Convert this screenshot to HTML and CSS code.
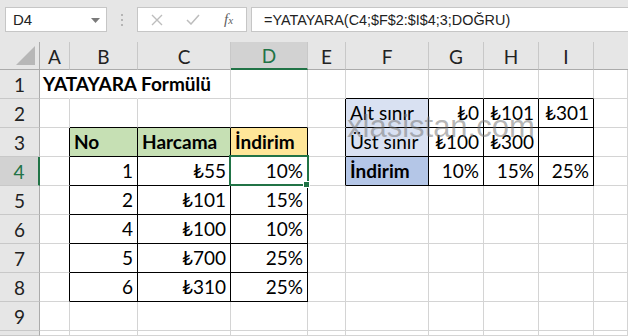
FILE: index.html
```html
<!DOCTYPE html>
<html lang="tr">
<head>
<meta charset="utf-8">
<title>YATAYARA</title>
<link rel="stylesheet" href="styles.css">
</head>
<body>
<div class="app">
  <div class="toolbar">
    <div class="namebox"><span>D4</span>
      <svg class="dd" width="9" height="5" viewBox="0 0 9 5"><path d="M0 0H9L4.5 5Z" fill="#7a7a7a"/></svg>
    </div>
    <div class="grip">
      <svg width="3" height="12" viewBox="0 0 3 12"><rect x="0" y="0" width="2" height="2" fill="#b5b5b5"/><rect x="0" y="5" width="2" height="2" fill="#b5b5b5"/><rect x="0" y="10" width="2" height="2" fill="#b5b5b5"/></svg>
    </div>
    <div class="fxbox">
      <svg class="ico" width="12" height="12" viewBox="0 0 12 12"><path d="M1 1L11 11M11 1L1 11" stroke="#bdbdbd" stroke-width="1.4" fill="none"/></svg>
      <svg class="ico" width="14" height="11" viewBox="0 0 14 11"><path d="M1 6L5 10L13 1" stroke="#bdbdbd" stroke-width="1.5" fill="none"/></svg>
      <span class="fx"><i>f</i><span class="x">x</span></span>
    </div>
    <div class="formula">=YATAYARA(C4;$F$2:$I$4;3;DOĞRU)</div>
  </div>
  <div class="sheet">
    <!-- header row -->
    <div class="corner"><svg width="20" height="20" viewBox="0 0 20 20"><path d="M19 0V19H0Z" fill="#b7b7b7"/></svg></div>
    <div class="ch">A</div><div class="ch">B</div><div class="ch">C</div><div class="ch sel">D</div><div class="ch">E</div><div class="ch">F</div><div class="ch">G</div><div class="ch">H</div><div class="ch">I</div><div class="ch last"></div>
    <!-- row 1 -->
    <div class="rh">1</div>
    <div class="c ov b title">YATAYARA Formülü</div><div class="c ov"></div><div class="c"></div><div class="c"></div><div class="c"></div>
    <div class="c kbb"></div><div class="c kbb"></div><div class="c kbb"></div><div class="c kbb"></div><div class="c"></div>
    <!-- row 2 -->
    <div class="rh">2</div>
    <div class="c"></div><div class="c kbb"></div><div class="c kbb"></div><div class="c kbb"></div><div class="c kbr"></div>
    <div class="c kb lb">Alt sınır</div><div class="c kb r">₺0</div><div class="c kb r">₺101</div><div class="c kb r">₺301</div><div class="c"></div>
    <!-- row 3 -->
    <div class="rh">3</div>
    <div class="c kbr"></div><div class="c kb g b">No</div><div class="c kb g b">Harcama</div><div class="c kb y b">İndirim</div><div class="c kbr"></div>
    <div class="c kb lb">Üst sınır</div><div class="c kb r">₺100</div><div class="c kb r">₺300</div><div class="c kb"></div><div class="c"></div>
    <!-- row 4 -->
    <div class="rh selr">4</div>
    <div class="c kbr"></div><div class="c kb r">1</div><div class="c kb r">₺55</div><div class="c kb r active">10%<span class="selbox"></span><span class="handle"></span></div><div class="c kbr"></div>
    <div class="c kb db b">İndirim</div><div class="c kb r">10%</div><div class="c kb r">15%</div><div class="c kb r">25%</div><div class="c"></div>
    <!-- row 5 -->
    <div class="rh">5</div>
    <div class="c kbr"></div><div class="c kb r">2</div><div class="c kb r">₺101</div><div class="c kb r">15%</div><div class="c"></div>
    <div class="c"></div><div class="c"></div><div class="c"></div><div class="c"></div><div class="c"></div>
    <!-- row 6 -->
    <div class="rh">6</div>
    <div class="c kbr"></div><div class="c kb r">4</div><div class="c kb r">₺100</div><div class="c kb r">10%</div><div class="c"></div>
    <div class="c"></div><div class="c"></div><div class="c"></div><div class="c"></div><div class="c"></div>
    <!-- row 7 -->
    <div class="rh">7</div>
    <div class="c kbr"></div><div class="c kb r">5</div><div class="c kb r">₺700</div><div class="c kb r">25%</div><div class="c"></div>
    <div class="c"></div><div class="c"></div><div class="c"></div><div class="c"></div><div class="c"></div>
    <!-- row 8 -->
    <div class="rh">8</div>
    <div class="c kbr"></div><div class="c kb r">6</div><div class="c kb r">₺310</div><div class="c kb r">25%</div><div class="c"></div>
    <div class="c"></div><div class="c"></div><div class="c"></div><div class="c"></div><div class="c"></div>
    <!-- row 9 -->
    <div class="rh">9</div>
    <div class="c"></div><div class="c"></div><div class="c"></div><div class="c"></div><div class="c"></div>
    <div class="c"></div><div class="c"></div><div class="c"></div><div class="c"></div><div class="c"></div>
    <!-- row 10 -->
    <div class="rh"></div>
    <div class="c"></div><div class="c"></div><div class="c"></div><div class="c"></div><div class="c"></div>
    <div class="c"></div><div class="c"></div><div class="c"></div><div class="c"></div><div class="c"></div>
    <div class="watermark">xlasistan.com</div>
  </div>
</div>
</body>
</html>
```
FILE: styles.css
```css
* { box-sizing: border-box; }
html, body { margin: 0; padding: 0; }
body {
  width: 628px;
  height: 336px;
  overflow: hidden;
  background: #fff;
  font-family: Lato, "DejaVu Sans", sans-serif;
}
.app { width: 628px; height: 336px; display: flex; flex-direction: column; }

.toolbar {
  height: 42px;
  background: #e6e6e6;
  display: flex;
  align-items: flex-start;
  padding-top: 7px;
  padding-left: 5px;
  flex: none;
}
.namebox {
  width: 102px;
  height: 25px;
  background: #fff;
  border: 1px solid #c6c6c6;
  display: flex;
  align-items: center;
  justify-content: space-between;
  padding: 0 6px 0 7px;
  font-family: "Liberation Sans", sans-serif;
  font-size: 15px;
  color: #222;
}
.dd { margin-top: 1px; }
.grip {
  width: 30px;
  height: 25px;
  display: flex;
  align-items: center;
  justify-content: center;
}
.fxbox {
  width: 110px;
  height: 25px;
  background: #fff;
  border: 1px solid #c6c6c6;
  display: flex;
  align-items: center;
  padding-left: 13px;
  gap: 23px;
}
.fx {
  font-family: "Liberation Serif", serif;
  color: #5f5f5f;
  font-size: 15px;
  margin-left: 1px;
}
.fx i { font-style: italic; }
.fx .x { font-style: italic; font-size: 11px; }
.formula {
  flex: 1;
  margin-left: 4px;
  height: 25px;
  background: #fff;
  border: 1px solid #c6c6c6;
  border-right: none;
  padding-left: 12px;
  display: flex;
  align-items: center;
  font-family: "Liberation Sans", sans-serif;
  font-size: 14.4px;
  color: #222;
  white-space: nowrap;
}

.sheet {
  position: relative;
  flex: 1;
  display: grid;
  grid-template-columns: 40px 30px 68px 93px 77px 38px 83px 55px 55px 55px 1fr;
  grid-template-rows: 28px repeat(9, 29px) 1fr;
  font-size: 19px;
  color: #000;
  overflow: hidden;
}
.corner {
  background: #e6e6e6;
  border-right: 1px solid #ababab;
  border-bottom: 1px solid #ababab;
  display: flex;
  align-items: flex-end;
  justify-content: flex-end;
  padding: 0 3px 3px 0;
}
.ch {
  background: #e6e6e6;
  border-right: 1px solid #c8c8c8;
  border-bottom: 1px solid #ababab;
  display: flex;
  align-items: center;
  justify-content: center;
  padding-top: 1px;
  color: #222;
}
.ch.last { border-right: none; }
.ch.sel {
  background: #d2d2d2;
  border-bottom: 2px solid #217346;
  color: #217346;
}
.rh {
  background: #e6e6e6;
  border-right: 1px solid #ababab;
  border-bottom: 1px solid #c8c8c8;
  display: flex;
  align-items: center;
  justify-content: center;
  color: #222;
}
.rh.selr {
  background: #d2d2d2;
  border-right: 2px solid #217346;
  color: #217346;
}
.c {
  border-right: 1px solid #d4d4d4;
  border-bottom: 1px solid #d4d4d4;
  line-height: 28px;
  padding: 0 4px;
  white-space: nowrap;
  overflow: hidden;
}
.c.ov { overflow: visible; border-right-color: #fff; position: relative; z-index: 1; }
.title { padding-left: 3px; }
.r { text-align: right; }
.b { font-weight: bold; }
.g { background: #c6e0b4; }
.y { background: #ffe699; }
.lb { background: #d9e1f2; }
.db { background: #b4c6e7; }
.kb { border-right-color: #000; border-bottom-color: #000; }
.kbb { border-bottom-color: #000; }
.kbr { border-right-color: #000; }
.active { position: relative; overflow: visible; }
.selbox {
  position: absolute;
  left: -2px;
  top: -2px;
  width: 80px;
  height: 31px;
  border: 2px solid #217346;
}
.handle {
  position: absolute;
  left: 72px;
  top: 24px;
  width: 7px;
  height: 7px;
  background: #217346;
  border: 1px solid #fff;
}
.watermark {
  position: absolute;
  left: 347px;
  top: 67px;
  font-family: "Liberation Sans", sans-serif;
  font-size: 31px;
  line-height: 35px;
  color: rgba(120, 120, 120, 0.55);
  pointer-events: none;
}
```
